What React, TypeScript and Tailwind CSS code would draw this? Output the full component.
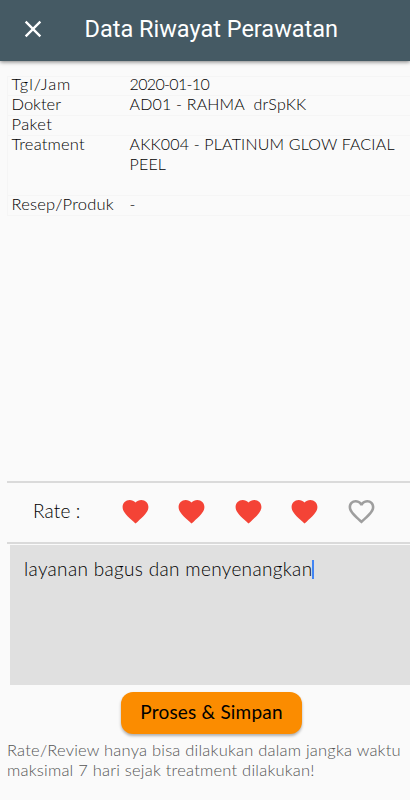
import { MdClose, MdFavorite, MdFavoriteBorder } from "react-icons/md";

const rows = [
  {
    label: "Tgl/Jam",
    value: "2020-01-10",
    height: "h-[19px]",
    offset: "-mt-[3px]",
    labelSpacing: "tracking-[0.9px]",
    spacing: "tracking-[-0.65px]",
  },
  {
    label: "Dokter",
    value: "AD01 - RAHMA  drSpKK",
    height: "h-5",
    offset: "-mt-0.5",
    labelSpacing: "tracking-normal",
    spacing: "tracking-[0.2px]",
  },
  {
    label: "Paket",
    value: "",
    height: "h-5",
    offset: "-mt-0.5",
    labelSpacing: "tracking-[0.4px]",
    spacing: "tracking-normal",
  },
  {
    label: "Treatment",
    value: "AKK004 - PLATINUM GLOW FACIAL\nPEEL",
    height: "h-[60px]",
    offset: "-mt-0.5",
    labelSpacing: "tracking-[0.2px]",
    spacing: "tracking-[0.18px]",
  },
  {
    label: "Resep/Produk",
    value: "-",
    height: "h-5",
    offset: "-mt-0.5",
    labelSpacing: "tracking-[0.2px]",
    spacing: "tracking-normal",
  },
];

const rating = 4;

export default function App() {
  return (
    <div className="flex h-[800px] w-[410px] flex-col overflow-hidden bg-[#fafafa] font-['Lato',sans-serif] font-light text-black">
      <header className="flex h-[61px] shrink-0 items-center bg-[#455a64] pl-[19px] text-white shadow-[0_1px_4px_rgba(0,0,0,0.5)]">
        <MdClose className="mt-[-3px] size-7" />
        <h1 className="mt-[-2px] ml-[37.5px] font-['Roboto',sans-serif] text-[23.5px] font-normal whitespace-nowrap">
          Data Riwayat Perawatan
        </h1>
      </header>

      <main className="flex grow flex-col">
        <div className="mt-[15px] ml-[7px] border-l border-[#f5f5f5] text-[16px] leading-5">
          {rows.map((row) => (
            <div
              key={row.label}
              className={`flex border-t border-[#f5f5f5] pl-[3.5px] ${row.height}`}
            >
              <div
                className={`w-[118px] shrink-0 text-[16.5px] ${row.offset} ${row.labelSpacing}`}
              >
                {row.label}
              </div>
              <div className={`whitespace-pre ${row.offset} ${row.spacing}`}>
                {row.value}
              </div>
            </div>
          ))}
          <div className="border-t border-[#f5f5f5]" />
        </div>

        <div className="mt-auto ml-[7px] flex h-[63px] shrink-0 items-center border-y-2 border-[#dadada] pl-[26px]">
          <span className="mt-[-2px] w-[89px] text-[19px] tracking-[0.15px]">Rate :</span>
          <div className="mt-[-2px] ml-[-2px] flex gap-[25.4px]">
            {[1, 2, 3, 4, 5].map((n) =>
              n <= rating ? (
                <MdFavorite key={n} className="size-[31px] text-[#f44336]" />
              ) : (
                <MdFavoriteBorder key={n} className="size-[31px] text-[#9e9e9e]" />
              ),
            )}
          </div>
        </div>

        <div className="mt-px ml-[10px] flex h-[140px] shrink-0 items-start bg-[#e0e0e0] pt-[15px] pl-[14px]">
          <span className="mt-[-1px] text-[19px] leading-5 tracking-[0.33px] whitespace-nowrap">
            layanan bagus dan menyenangkan
          </span>
          <span className="h-[19px] w-0.5 bg-[#4285f4]" />
        </div>

        <button className="mt-[7px] ml-[121px] h-[42px] w-[181px] shrink-0 rounded-xl bg-[#fb8c00] pb-px text-[19px] font-normal tracking-[0.2px] text-black shadow-[0_2px_3px_rgba(0,0,0,0.3)]">
          Proses &amp; Simpan
        </button>

        <p className="mt-[6px] mb-5 ml-[7px] text-[16.5px] leading-5 tracking-[0.22px] whitespace-nowrap text-[#555]">
          Rate/Review hanya bisa dilakukan dalam jangka waktu
          <br />
          maksimal 7 hari sejak treatment dilakukan!
        </p>
      </main>
    </div>
  );
}
